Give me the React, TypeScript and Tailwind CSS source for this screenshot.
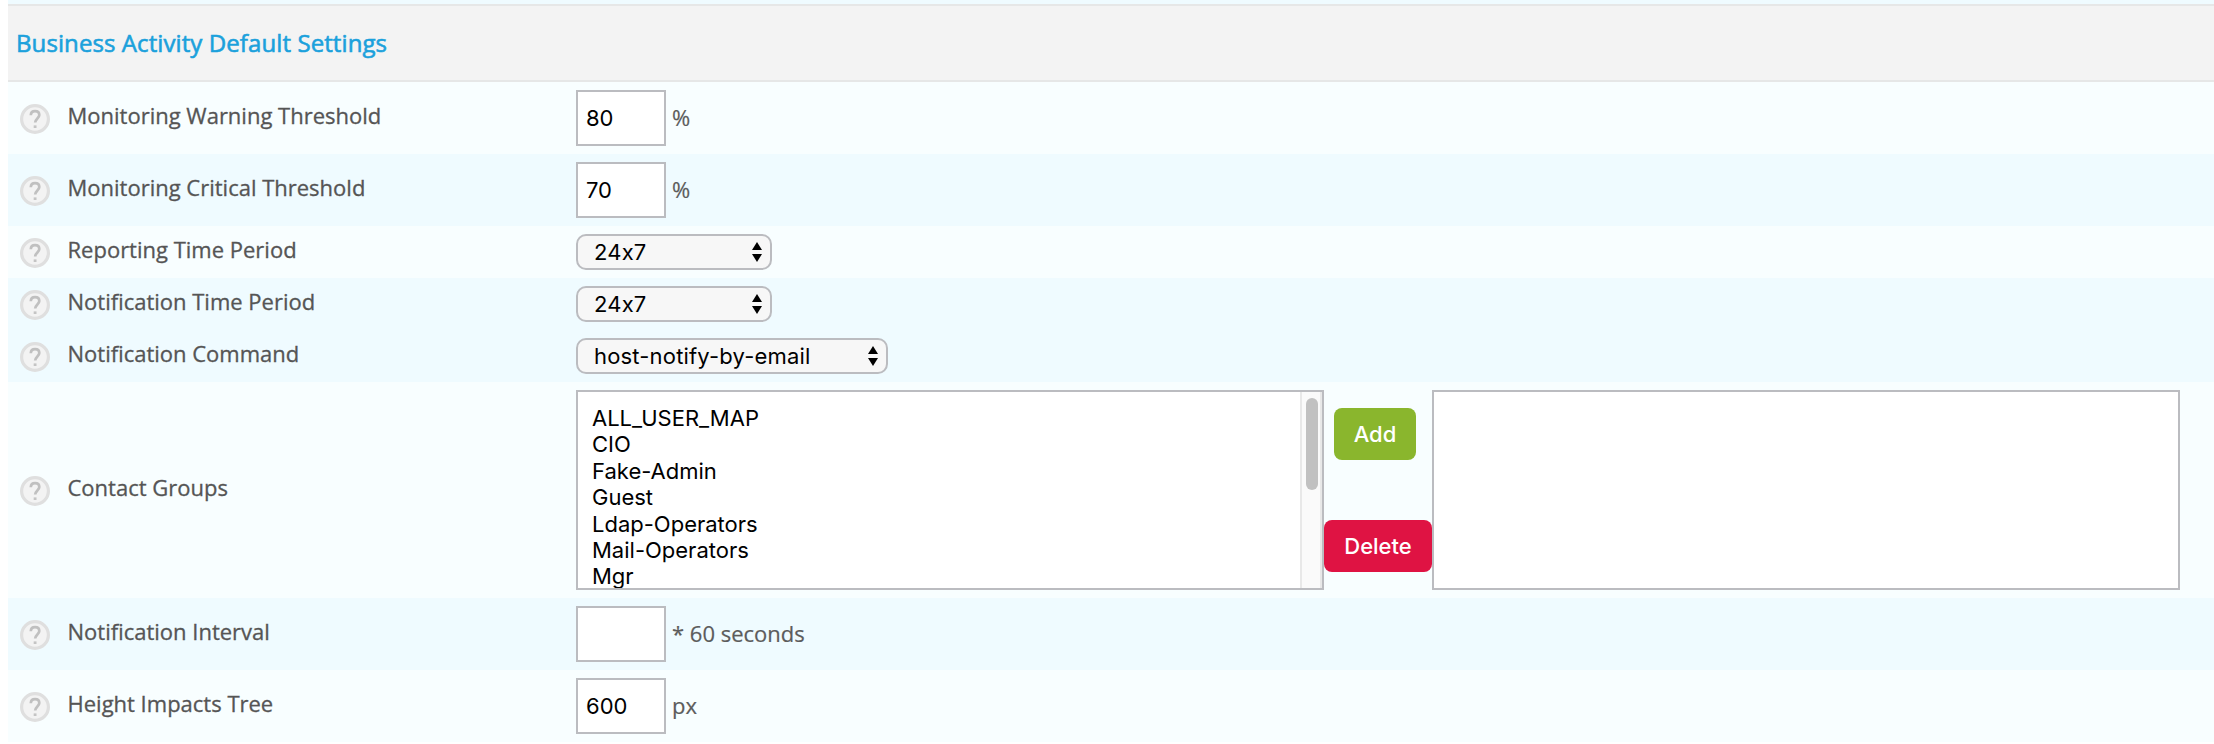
import type { ReactNode } from "react";

const ui = "font-['Inter','Liberation_Sans',sans-serif] [font-feature-settings:'calt'_0]";

function HelpIcon() {
  return (
    <svg width="30" height="30" viewBox="0 0 30 30" className="mt-0.5 shrink-0">
      <circle cx="15" cy="15" r="13.4" fill="#f3f3f3" stroke="#dfdfdf" strokeWidth="3.2" />
      <path
        d="M10.8 11.2C10.9 8.6 12.6 7.2 15 7.2c2.6 0 4.3 1.5 4.3 3.8 0 3.2-4.1 3.8-4.1 7.6"
        fill="none"
        stroke="#c0c0c0"
        strokeWidth="2.7"
      />
      <rect x="13.7" y="21.4" width="2.8" height="2.6" fill="#c4c4c4" />
    </svg>
  );
}

type RowProps = { label: string; height: string; tone: string; children: ReactNode };

function Row({ label, height, tone, children }: RowProps) {
  return (
    <div className={`flex items-center pl-3 ${height} ${tone}`}>
      <HelpIcon />
      <div className="ml-[17.5px] w-[508.5px] shrink-0 pb-[7px] text-[22px] leading-[30px] text-[#555] [-webkit-text-stroke:0.3px_#555]">
        {label}
      </div>
      {children}
    </div>
  );
}

function NumberField({ value, suffix }: { value: string; suffix: string }) {
  return (
    <div className="flex items-center">
      <input
        type="text"
        defaultValue={value}
        className={`h-14 w-[90px] border-2 border-[#bbbcc0] bg-white px-2 text-[22px] text-black outline-none ${ui}`}
      />
      <span className="ml-1.5 pb-0.5 text-[22px] leading-[30px] text-[#5c5c5c] [-webkit-text-stroke:0.2px_#5c5c5c]">{suffix}</span>
    </div>
  );
}

function SelectField({ value, width }: { value: string; width: string }) {
  return (
    <div
      className={`flex h-9 items-center justify-between rounded-[10px] border-2 border-[#bbbcc0] bg-[#f7f7f7] pr-2 pl-4 text-[22px] leading-none tracking-[0.18px] text-black ${width} ${ui}`}
    >
      <span>{value}</span>
      <svg width="10" height="20" viewBox="0 0 10 20">
        <path d="M5 0 10 8H0zM5 20 10 12H0z" fill="#000" />
      </svg>
    </div>
  );
}

const groups = ["ALL_USER_MAP", "CIO", "Fake-Admin", "Guest", "Ldap-Operators", "Mail-Operators", "Mgr"];

const light = "bg-[#f8feff]";
const tinted = "bg-[#effbff]";

export default function App() {
  return (
    <div className="h-[744px] w-[2214px] overflow-hidden bg-white pl-2 font-['Open_Sans',sans-serif]">
      <div className="h-1 bg-[#effbff]" />
      <div className="flex h-[78px] items-center border-y-2 border-[#e6e7e7] bg-[#f3f3f3] pl-2">
        <h1 className="text-2xl leading-8 tracking-[0.09px] text-[#1ba1dc] [-webkit-text-stroke:0.6px_#1ba1dc]">
          Business Activity Default Settings
        </h1>
      </div>
      <Row label="Monitoring Warning Threshold" height="h-[72px]" tone={light}>
        <NumberField value="80" suffix="%" />
      </Row>
      <Row label="Monitoring Critical Threshold" height="h-[72px]" tone={tinted}>
        <NumberField value="70" suffix="%" />
      </Row>
      <Row label="Reporting Time Period" height="h-[52px]" tone={light}>
        <SelectField value="24x7" width="w-[196px]" />
      </Row>
      <Row label="Notification Time Period" height="h-[52px]" tone={tinted}>
        <SelectField value="24x7" width="w-[196px]" />
      </Row>
      <Row label="Notification Command" height="h-[52px]" tone={tinted}>
        <SelectField value="host-notify-by-email" width="w-[312px]" />
      </Row>
      <Row label="Contact Groups" height="h-[216px]" tone={light}>
        <div className="flex h-[200px]">
          <div className="flex w-[748px] justify-between overflow-hidden border-2 border-[#bbbcc0] bg-white">
            <ul className={`pt-[13px] pl-3.5 text-[22px] leading-[26.4px] text-black ${ui}`}>
              {groups.map((group) => (
                <li key={group}>{group}</li>
              ))}
            </ul>
            <div className="w-[22px] border-x-2 border-[#e8e8e8] bg-[#fafafa] px-1 pt-1.5">
              <div className="h-[92px] w-3 rounded-full bg-[#c1c1c1]" />
            </div>
          </div>
          <div className={`flex w-[108px] flex-col items-center justify-between py-[18px] text-[22px] font-medium text-white ${ui}`}>
            <button className="mr-[6px] h-[52px] w-[82px] rounded-lg bg-[#8ab62d]">Add</button>
            <button className="h-[52px] w-[108px] rounded-lg bg-[#df1343]">Delete</button>
          </div>
          <div className="w-[748px] border-2 border-[#bbbcc0] bg-white" />
        </div>
      </Row>
      <Row label="Notification Interval" height="h-[72px]" tone={tinted}>
        <NumberField value="" suffix="* 60 seconds" />
      </Row>
      <Row label="Height Impacts Tree" height="h-[72px]" tone={light}>
        <NumberField value="600" suffix="px" />
      </Row>
    </div>
  );
}
